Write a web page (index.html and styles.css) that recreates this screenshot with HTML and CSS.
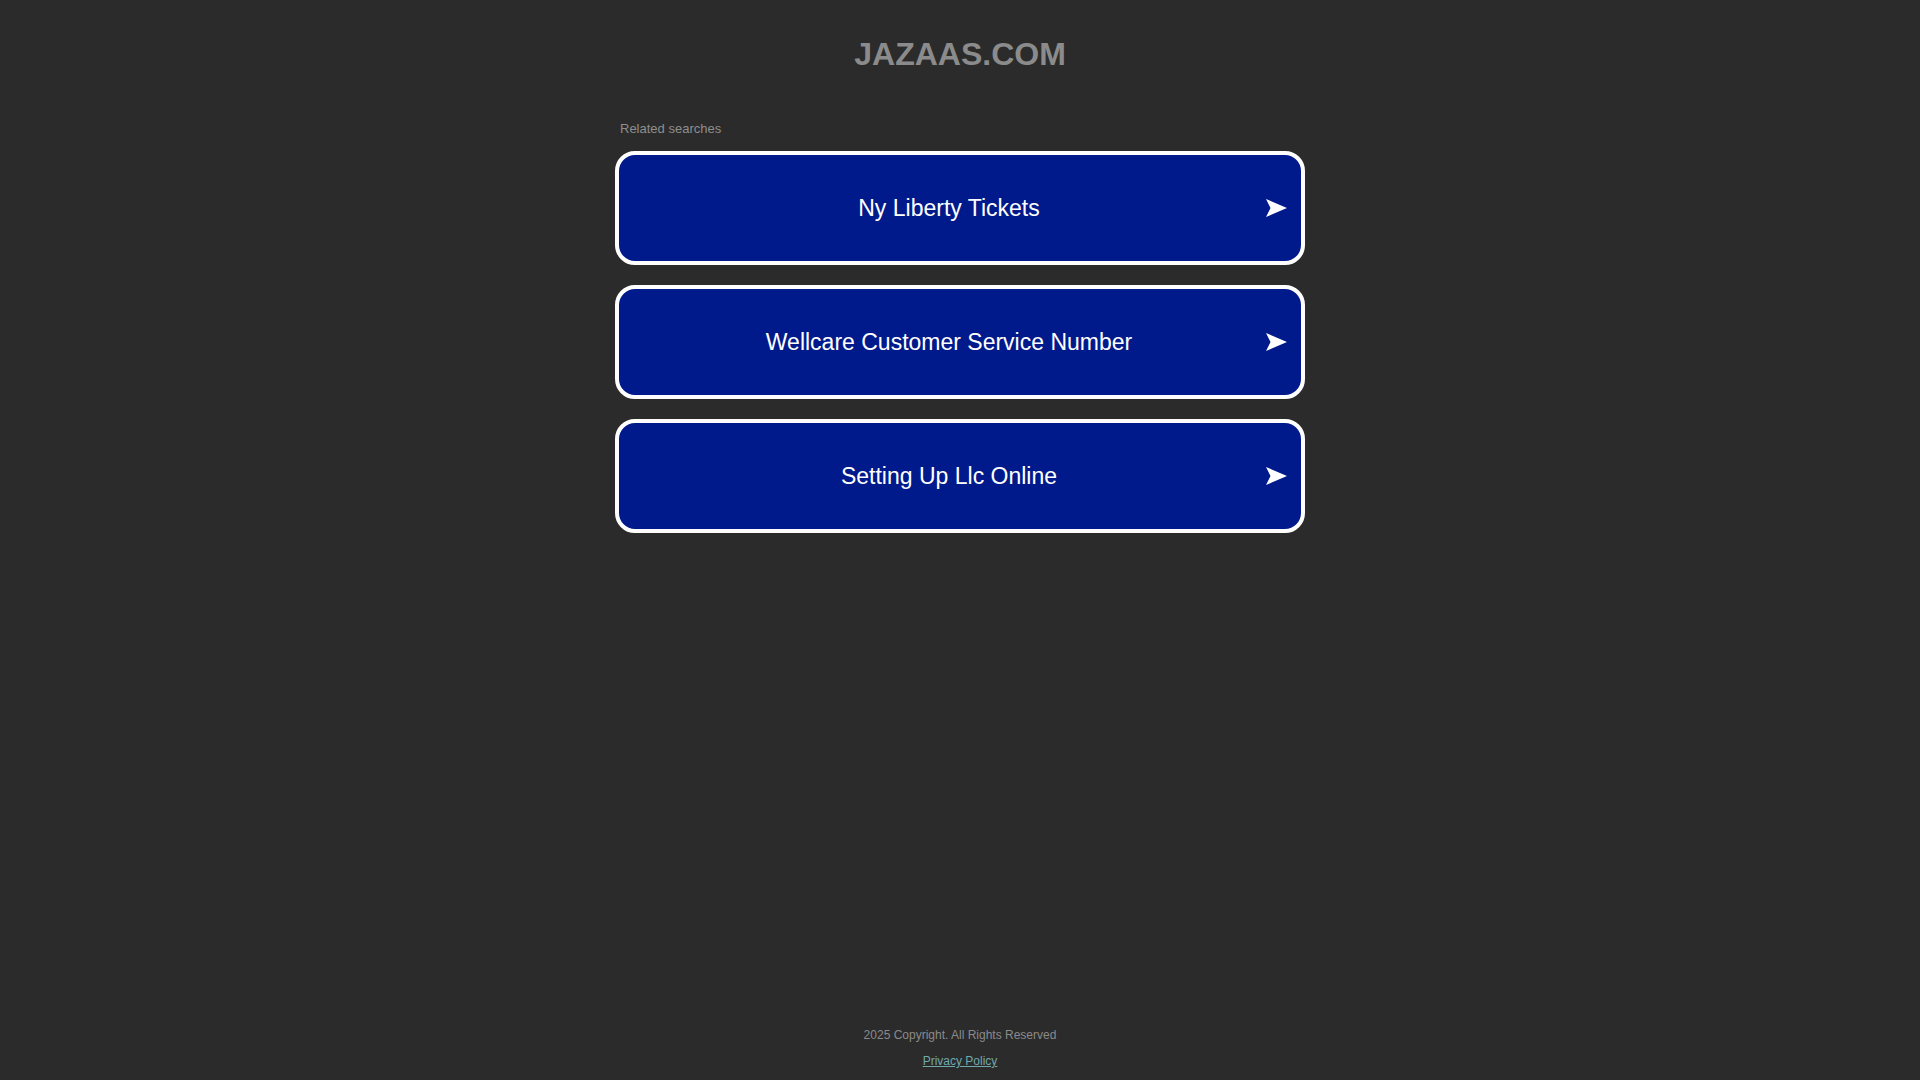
FILE: index.html
```html
<!DOCTYPE html>
<html lang="en">
<head>
<meta charset="utf-8">
<title>jazaas.com</title>
<link rel="stylesheet" href="styles.css">
</head>
<body>
<div class="page">
  <header class="header">
    <h1 class="domain">JAZAAS.COM</h1>
  </header>
  <main class="content">
    <div class="related">Related searches</div>
    <ul class="links">
      <li><a class="link" href="#"><span class="label">Ny Liberty Tickets</span><svg class="arrow" width="21" height="18" viewBox="0 0 21 18"><path d="M0 0 L21 9 L0 18 L4.5 9 Z" fill="#fff"/></svg></a></li>
      <li><a class="link" href="#"><span class="label">Wellcare Customer Service Number</span><svg class="arrow" width="21" height="18" viewBox="0 0 21 18"><path d="M0 0 L21 9 L0 18 L4.5 9 Z" fill="#fff"/></svg></a></li>
      <li><a class="link" href="#"><span class="label">Setting Up Llc Online</span><svg class="arrow" width="21" height="18" viewBox="0 0 21 18"><path d="M0 0 L21 9 L0 18 L4.5 9 Z" fill="#fff"/></svg></a></li>
    </ul>
  </main>
  <footer class="footer">
    <div class="copyright">2025 Copyright. All Rights Reserved</div>
    <a class="privacy" href="#">Privacy Policy</a>
  </footer>
</div>
</body>
</html>
```
FILE: styles.css
```css
html, body {
  margin: 0;
  padding: 0;
  background: #2b2b2b;
  font-family: "Liberation Sans", Arial, sans-serif;
}
.page {
  min-height: 100vh;
  display: flex;
  flex-direction: column;
  align-items: center;
}
.header {
  padding-top: 36px;
}
.domain {
  margin: 0;
  font-size: 32px;
  line-height: 37px;
  font-weight: bold;
  color: #8b8b8b;
  text-align: center;
}
.content {
  width: 690px;
  margin-top: 48px;
  flex: 1;
}
.related {
  font-size: 13px;
  line-height: 15px;
  color: #8e8e8e;
  padding-left: 5px;
  margin-bottom: 15px;
}
.links {
  list-style: none;
  margin: 0;
  padding: 0;
  display: flex;
  flex-direction: column;
  gap: 20px;
}
.link {
  position: relative;
  display: flex;
  align-items: center;
  justify-content: center;
  box-sizing: border-box;
  height: 114px;
  border: 4px solid #fff;
  border-radius: 20px;
  background: #011a8b;
  color: #fff;
  text-decoration: none;
  padding: 0 42px 0 20px;
}
.label {
  font-size: 23px;
  line-height: 27px;
}
.arrow {
  position: absolute;
  right: 14px;
  top: 50%;
  margin-top: -9px;
}
.footer {
  display: flex;
  flex-direction: column;
  align-items: center;
  gap: 12px;
  padding-bottom: 12px;
  font-size: 12px;
  line-height: 14px;
}
.copyright {
  color: #8a8a8a;
}
.privacy {
  color: #6fa9ab;
  text-decoration: underline;
}
```
